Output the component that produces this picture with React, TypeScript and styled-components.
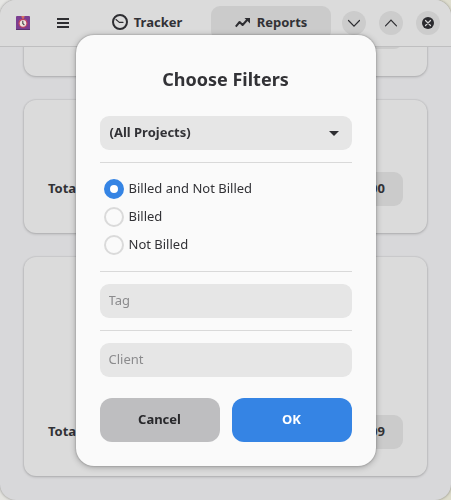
import React, { useState } from "react";
import styled, { createGlobalStyle, css } from "styled-components";

const GlobalStyle = createGlobalStyle`
  *, *::before, *::after { box-sizing: border-box; }
  body {
    margin: 0;
    background: linear-gradient(100deg, #e6e6e4, #dddccb);
    font-family: "Noto Sans", sans-serif;
    font-size: 13px;
    line-height: 20px;
    color: #323236;
  }
  button, input, select { font: inherit; color: inherit; }
`;

const Window = styled.div`
  display: flex;
  flex-direction: column;
  height: 100vh;
  overflow: hidden;
  border-radius: 16px;
  background: #d8d8da;
  box-shadow: 0 0 3px rgba(0, 0, 0, 0.4);
`;

const HeaderBar = styled.header`
  display: flex;
  flex: none;
  align-items: center;
  justify-content: space-between;
  height: 47px;
  padding: 0 11px 1px 12px;
  background: #dbdbdb;
  border-bottom: 1px solid #bfbfc0;
`;

const HeaderGroup = styled.div<{ $gap: number }>`
  display: flex;
  align-items: center;
  gap: ${(p) => p.$gap}px;
`;

const IconButton = styled.button<{ $round?: boolean }>`
  display: grid;
  place-items: center;
  width: 24px;
  height: 24px;
  padding: 0;
  border: 0;
  border-radius: 50%;
  background: ${(p) => (p.$round ? "#cccccc" : "transparent")};
`;

const AppLogo = styled.svg`
  display: block;
  margin-left: 4px;
`;

const Switcher = styled.nav`
  display: flex;
  align-items: center;
  gap: 4px;
  margin-left: 1px;
`;

const ViewTab = styled.button<{ $active?: boolean }>`
  display: flex;
  align-items: center;
  justify-content: center;
  gap: 6px;
  width: 120px;
  height: 34px;
  padding: 0 0 2px;
  border: 0;
  border-radius: 9px;
  font-weight: 700;
  background: ${(p) => (p.$active ? "#cbcbcb" : "transparent")};
`;

const History = styled.main`
  display: flex;
  flex: 1;
  flex-direction: column;
  justify-content: flex-end;
  gap: 24px;
  min-height: 0;
  overflow: hidden;
  padding: 0 24px 24px;
`;

const Card = styled.section<{ $tall?: boolean }>`
  display: flex;
  flex: none;
  align-items: flex-end;
  justify-content: space-between;
  min-height: ${(p) => (p.$tall ? 219 : 133)}px;
  padding: 24px 24px 27px;
  border-radius: 12px;
  background: #dbdbdb;
  box-shadow: 0 1px 3px rgba(0, 0, 0, 0.18), 0 0 1px 1px rgba(0, 0, 0, 0.05);
  font-weight: 700;
  line-height: 32px;
`;

const TotalValue = styled.output`
  min-width: 96px;
  min-height: 34px;
  margin-left: auto;
  padding: 0 18px 2px;
  border-radius: 9px;
  background: #cbcbcb;
  text-align: right;
`;

const TotalLabel = styled.span`
  padding-bottom: 2px;
`;

const Overlay = styled.div`
  position: fixed;
  inset: 0;
  display: grid;
  place-items: center;
  padding-top: 1px;
`;

const Dialog = styled.form`
  display: flex;
  flex-direction: column;
  gap: 12px;
  width: 300px;
  padding: 24px;
  border-radius: 18px;
  background: #fafafa;
  box-shadow: 0 1px 6px rgba(0, 0, 0, 0.3), 0 0 2px rgba(0, 0, 0, 0.3);
`;

const Title = styled.h1`
  margin: 0 0 5px;
  font-size: 18px;
  line-height: 40px;
  text-align: center;
`;

const Divider = styled.hr`
  width: 100%;
  height: 1px;
  margin: 0;
  border: 0;
  background: #d9d9d9;
`;

const field = css`
  width: 100%;
  height: 34px;
  border: 0;
  border-radius: 9px;
  background: #e6e6e6;
`;

const SelectBox = styled.div`
  display: grid;
  align-items: center;
  > * { grid-area: 1 / 1; }
  svg {
    justify-self: end;
    margin-right: 13px;
    pointer-events: none;
  }
`;

const Select = styled.select`
  ${field}
  appearance: none;
  padding: 0 32px 2px 10px;
  font-weight: 700;
`;

const TextField = styled.input`
  ${field}
  padding: 0 9px 2px;
  &::placeholder { color: #8b8b8d; opacity: 1; }
`;

const RadioGroup = styled.div`
  display: flex;
  flex-direction: column;
`;

const RadioLabel = styled.label`
  display: flex;
  align-items: center;
  gap: 5px;
  height: 28px;
  padding-left: 4px;
`;

const RadioText = styled.span`
  padding-bottom: 2px;
`;

const Radio = styled.input`
  appearance: none;
  width: 20px;
  height: 20px;
  margin: 0;
  border: 2px solid #dadada;
  border-radius: 50%;
  &:checked {
    border: 6px solid #3584e4;
    background: #ffffff;
  }
`;

const Actions = styled.div`
  display: grid;
  grid-template-columns: 1fr 1fr;
  gap: 12px;
  margin-top: 9px;
`;

const ActionButton = styled.button<{ $primary?: boolean }>`
  height: 44px;
  padding: 0 0 2px;
  border: 0;
  border-radius: 12px;
  font-weight: 700;
  color: ${(p) => (p.$primary ? "#ffffff" : "#28282b")};
  background: ${(p) => (p.$primary ? "#3584e4" : "#bebec0")};
`;

const Logo = () => (
  <AppLogo width="14" height="14" viewBox="0 0 14 14" aria-hidden="true">
    <rect width="14" height="14" rx="1" fill="#7b3e91" />
    <path d="M0 13.5H14" stroke="#59316e" />
    <path d="M5.5 .8h3M7 1v2" stroke="#d9765f" strokeWidth="1.4" />
    <circle cx="7" cy="7.3" r="4" fill="#eee4dc" stroke="#bd3f60" strokeWidth="1.3" />
    <path d="M6.8 4.8v2.7l1.6 1.6" fill="none" stroke="#47434a" strokeWidth="1.1" />
  </AppLogo>
);

const MenuIcon = () => (
  <svg width="12" height="10" viewBox="0 0 12 10" fill="#2e2e32" aria-hidden="true">
    <path d="M0 0h12v2H0zM0 4h12v2H0zM0 8h12v2H0z" />
  </svg>
);

const ClockIcon = () => (
  <svg width="16" height="16" viewBox="0 0 16 16" fill="none" stroke="#2e2e32" aria-hidden="true">
    <circle cx="8" cy="8" r="7" strokeWidth="2" />
    <path d="M4 5.5 7.3 8.4H11" strokeWidth="1.1" strokeLinecap="round" strokeLinejoin="round" />
  </svg>
);

const TrendIcon = () => (
  <svg width="16" height="16" viewBox="0 0 16 16" fill="none" stroke="#2e2e32" strokeWidth="2" aria-hidden="true">
    <path d="M.8 12.7 4.6 8 7.6 11 12.5 5.5" strokeLinejoin="round" />
    <path d="M9.5 4H15v5.5z" fill="#2e2e32" stroke="none" />
  </svg>
);

const Chevron = ({ up = false }: { up?: boolean }) => (
  <svg width="14" height="14" viewBox="0 0 14 14" fill="none" stroke="#2e2e32" strokeWidth="1.2" strokeLinecap="round" aria-hidden="true">
    <path d={up ? "M1.5 9.8 7 4.2l5.5 5.6" : "M1.5 4.5 7 10.1l5.5-5.6"} />
  </svg>
);

const CloseIcon = () => (
  <svg width="12" height="12" viewBox="0 0 12 12" aria-hidden="true">
    <circle cx="6" cy="6" r="6" fill="#2a2a2e" />
    <path d="m3.5 3.5 5 5m0-5-5 5" stroke="#d5d5d5" strokeWidth="1.2" strokeLinecap="round" />
  </svg>
);

const CaretIcon = () => (
  <svg width="10" height="5" viewBox="0 0 10 5" aria-hidden="true">
    <path d="M0 0h10L5 5z" fill="#2e2e32" />
  </svg>
);

const billing = ["Billed and Not Billed", "Billed", "Not Billed"];

const totals = [
  { label: "", value: "", tall: false },
  { label: "Total", value: "00:00:00", tall: false },
  { label: "Total", value: "00:00:09", tall: true },
];

export default function App() {
  const [status, setStatus] = useState(billing[0]);

  return (
    <>
      <GlobalStyle />
      <Window>
        <HeaderBar>
          <HeaderGroup $gap={21}>
            <Logo />
            <IconButton aria-label="Menu"><MenuIcon /></IconButton>
          </HeaderGroup>
          <Switcher>
            <ViewTab><ClockIcon />Tracker</ViewTab>
            <ViewTab $active><TrendIcon />Reports</ViewTab>
          </Switcher>
          <HeaderGroup $gap={13}>
            <IconButton $round aria-label="Minimize"><Chevron /></IconButton>
            <IconButton $round aria-label="Maximize"><Chevron up /></IconButton>
            <IconButton $round aria-label="Close"><CloseIcon /></IconButton>
          </HeaderGroup>
        </HeaderBar>
        <History>
          {totals.map((total, index) => (
            <Card key={index} $tall={total.tall}>
              {total.label && <TotalLabel>{total.label}</TotalLabel>}
              <TotalValue>{total.value}</TotalValue>
            </Card>
          ))}
        </History>
      </Window>
      <Overlay>
        <Dialog role="dialog" aria-labelledby="filters-title" onSubmit={(e) => e.preventDefault()}>
          <Title id="filters-title">Choose Filters</Title>
          <SelectBox>
            <Select aria-label="Project">
              <option>(All Projects)</option>
            </Select>
            <CaretIcon />
          </SelectBox>
          <Divider />
          <RadioGroup role="radiogroup" aria-label="Billing status">
            {billing.map((option) => (
              <RadioLabel key={option}>
                <Radio type="radio" name="billing" checked={status === option} onChange={() => setStatus(option)} />
                <RadioText>{option}</RadioText>
              </RadioLabel>
            ))}
          </RadioGroup>
          <Divider />
          <TextField aria-label="Tag" placeholder="Tag" />
          <Divider />
          <TextField aria-label="Client" placeholder="Client" />
          <Actions>
            <ActionButton type="button">Cancel</ActionButton>
            <ActionButton type="submit" $primary>OK</ActionButton>
          </Actions>
        </Dialog>
      </Overlay>
    </>
  );
}
